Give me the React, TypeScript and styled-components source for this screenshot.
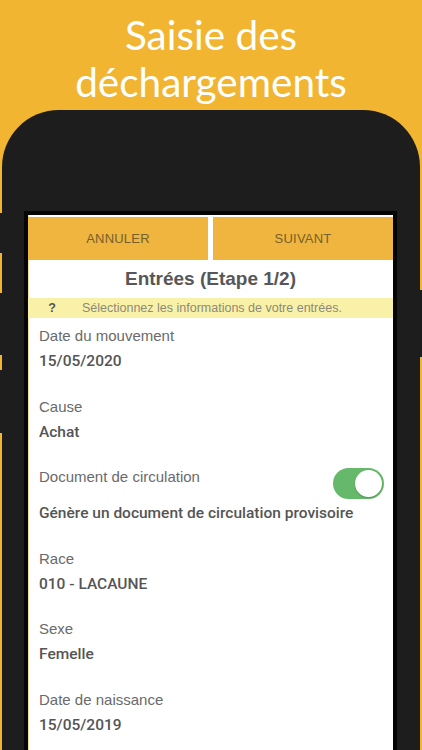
import React from 'react'
import styled, { createGlobalStyle } from 'styled-components'

const GlobalStyle = createGlobalStyle`
  html, body {
    margin: 0;
    padding: 0;
    background: #f2b531;
  }
  body {
    width: 422px;
    height: 750px;
    overflow: hidden;
    font-family: 'Liberation Sans', Arial, sans-serif;
  }
`

const Page = styled.div`
  width: 422px;
  height: 750px;
  overflow: hidden;
  background: #f2b531;
`

const Headline = styled.h1`
  margin: 0;
  padding-top: 11px;
  font-family: Lato, 'Open Sans', sans-serif;
  font-weight: 400;
  font-size: 40.5px;
  line-height: 47px;
  color: #ffffff;
  text-align: center;
`

const Phone = styled.div`
  position: relative;
  margin: 5px 2px 0 2px;
  width: 418px;
  height: 700px;
  background: #1d1d1d;
  border-radius: 57px 57px 0 0;
  padding: 101px 23px 0 22px;
  box-sizing: border-box;
`

const SideButton = styled.div<{ $side: 'left' | 'right'; $top: number; $height: number }>`
  position: absolute;
  ${({ $side }) => ($side === 'left' ? 'left: -2px;' : 'right: -3px;')}
  top: ${({ $top }) => $top}px;
  width: 4px;
  height: ${({ $height }) => $height}px;
  background: #1d1d1d;
`

const Screen = styled.div`
  background: #ffffff;
  border: 4px solid #050505;
  border-bottom: none;
  height: 600px;
  overflow: hidden;
  box-shadow: inset 1px 0 0 #f6dea0;
`

const ActionBar = styled.div`
  display: grid;
  grid-template-columns: 1fr 1fr;
  gap: 5px;
  padding-top: 2px;
`

const ActionButton = styled.div`
  height: 43px;
  background: #efb53e;
  color: #76602c;
  font-size: 13px;
  display: flex;
  align-items: center;
  justify-content: center;
  letter-spacing: 0.2px;
`

const StepTitle = styled.div`
  height: 38px;
  display: flex;
  align-items: center;
  justify-content: center;
  font-size: 19px;
  font-weight: 700;
  color: #575757;
`

const InfoBar = styled.div`
  height: 20px;
  background: #faf1a8;
  display: flex;
  align-items: center;
  font-size: 12.5px;
  color: #8c8a78;
`

const InfoMark = styled.span`
  width: 48px;
  margin-right: 6px;
  text-align: center;
  font-weight: 700;
  color: #555;
  font-size: 12.5px;
`

const Field = styled.div`
  padding: 7px 11px 16.5px 11px;
`

const FieldRow = styled.div`
  display: flex;
  justify-content: space-between;
  align-items: flex-start;
  height: 33px;
`

const Label = styled.div`
  font-size: 15px;
  line-height: 22px;
  color: #6a6a6a;
`

const Value = styled.div<{ $gap?: number }>`
  margin-top: ${({ $gap }) => $gap ?? 3}px;
  font-family: Roboto, 'Liberation Sans', sans-serif;
  font-size: 15.5px;
  line-height: 22px;
  font-weight: 500;
  color: #555555;
`

const Toggle = styled.div<{ $on: boolean }>`
  margin-top: 2px;
  margin-right: -2px;
  width: 51px;
  height: 31px;
  border-radius: 16px;
  background: ${({ $on }) => ($on ? '#66b96a' : '#e5e5e5')};
  position: relative;
`

const Knob = styled.div<{ $on: boolean }>`
  position: absolute;
  top: 2px;
  ${({ $on }) => ($on ? 'right: 2px;' : 'left: 2px;')}
  width: 27px;
  height: 27px;
  border-radius: 50%;
  background: #ffffff;
  box-shadow: 0 1px 2px rgba(0, 0, 0, 0.2);
`

const FIELDS = [
  { label: 'Date du mouvement', value: '15/05/2020' },
  { label: 'Cause', value: 'Achat' },
]

const MORE_FIELDS = [
  { label: 'Race', value: '010 - LACAUNE' },
  { label: 'Sexe', value: 'Femelle' },
  { label: 'Date de naissance', value: '15/05/2019' },
]

export default function App() {
  return (
    <Page>
      <GlobalStyle />
      <Headline>
        Saisie des
        <br />
        déchargements
      </Headline>
      <Phone>
        <SideButton $side="left" $top={103} $height={40} />
        <SideButton $side="left" $top={183} $height={62} />
        <SideButton $side="left" $top={260} $height={63} />
        <SideButton $side="right" $top={180} $height={67} />
        <Screen>
          <ActionBar>
            <ActionButton>ANNULER</ActionButton>
            <ActionButton>SUIVANT</ActionButton>
          </ActionBar>
          <StepTitle>Entrées (Etape 1/2)</StepTitle>
          <InfoBar>
            <InfoMark>?</InfoMark>
            Sélectionnez les informations de votre entrées.
          </InfoBar>
          {FIELDS.map((f) => (
            <Field key={f.label}>
              <Label>{f.label}</Label>
              <Value>{f.value}</Value>
            </Field>
          ))}
          <Field>
            <FieldRow>
              <Label>Document de circulation</Label>
              <Toggle $on>
                <Knob $on />
              </Toggle>
            </FieldRow>
            <Value $gap={3}>Génère un document de circulation provisoire</Value>
          </Field>
          {MORE_FIELDS.map((f) => (
            <Field key={f.label}>
              <Label>{f.label}</Label>
              <Value>{f.value}</Value>
            </Field>
          ))}
        </Screen>
      </Phone>
    </Page>
  )
}
